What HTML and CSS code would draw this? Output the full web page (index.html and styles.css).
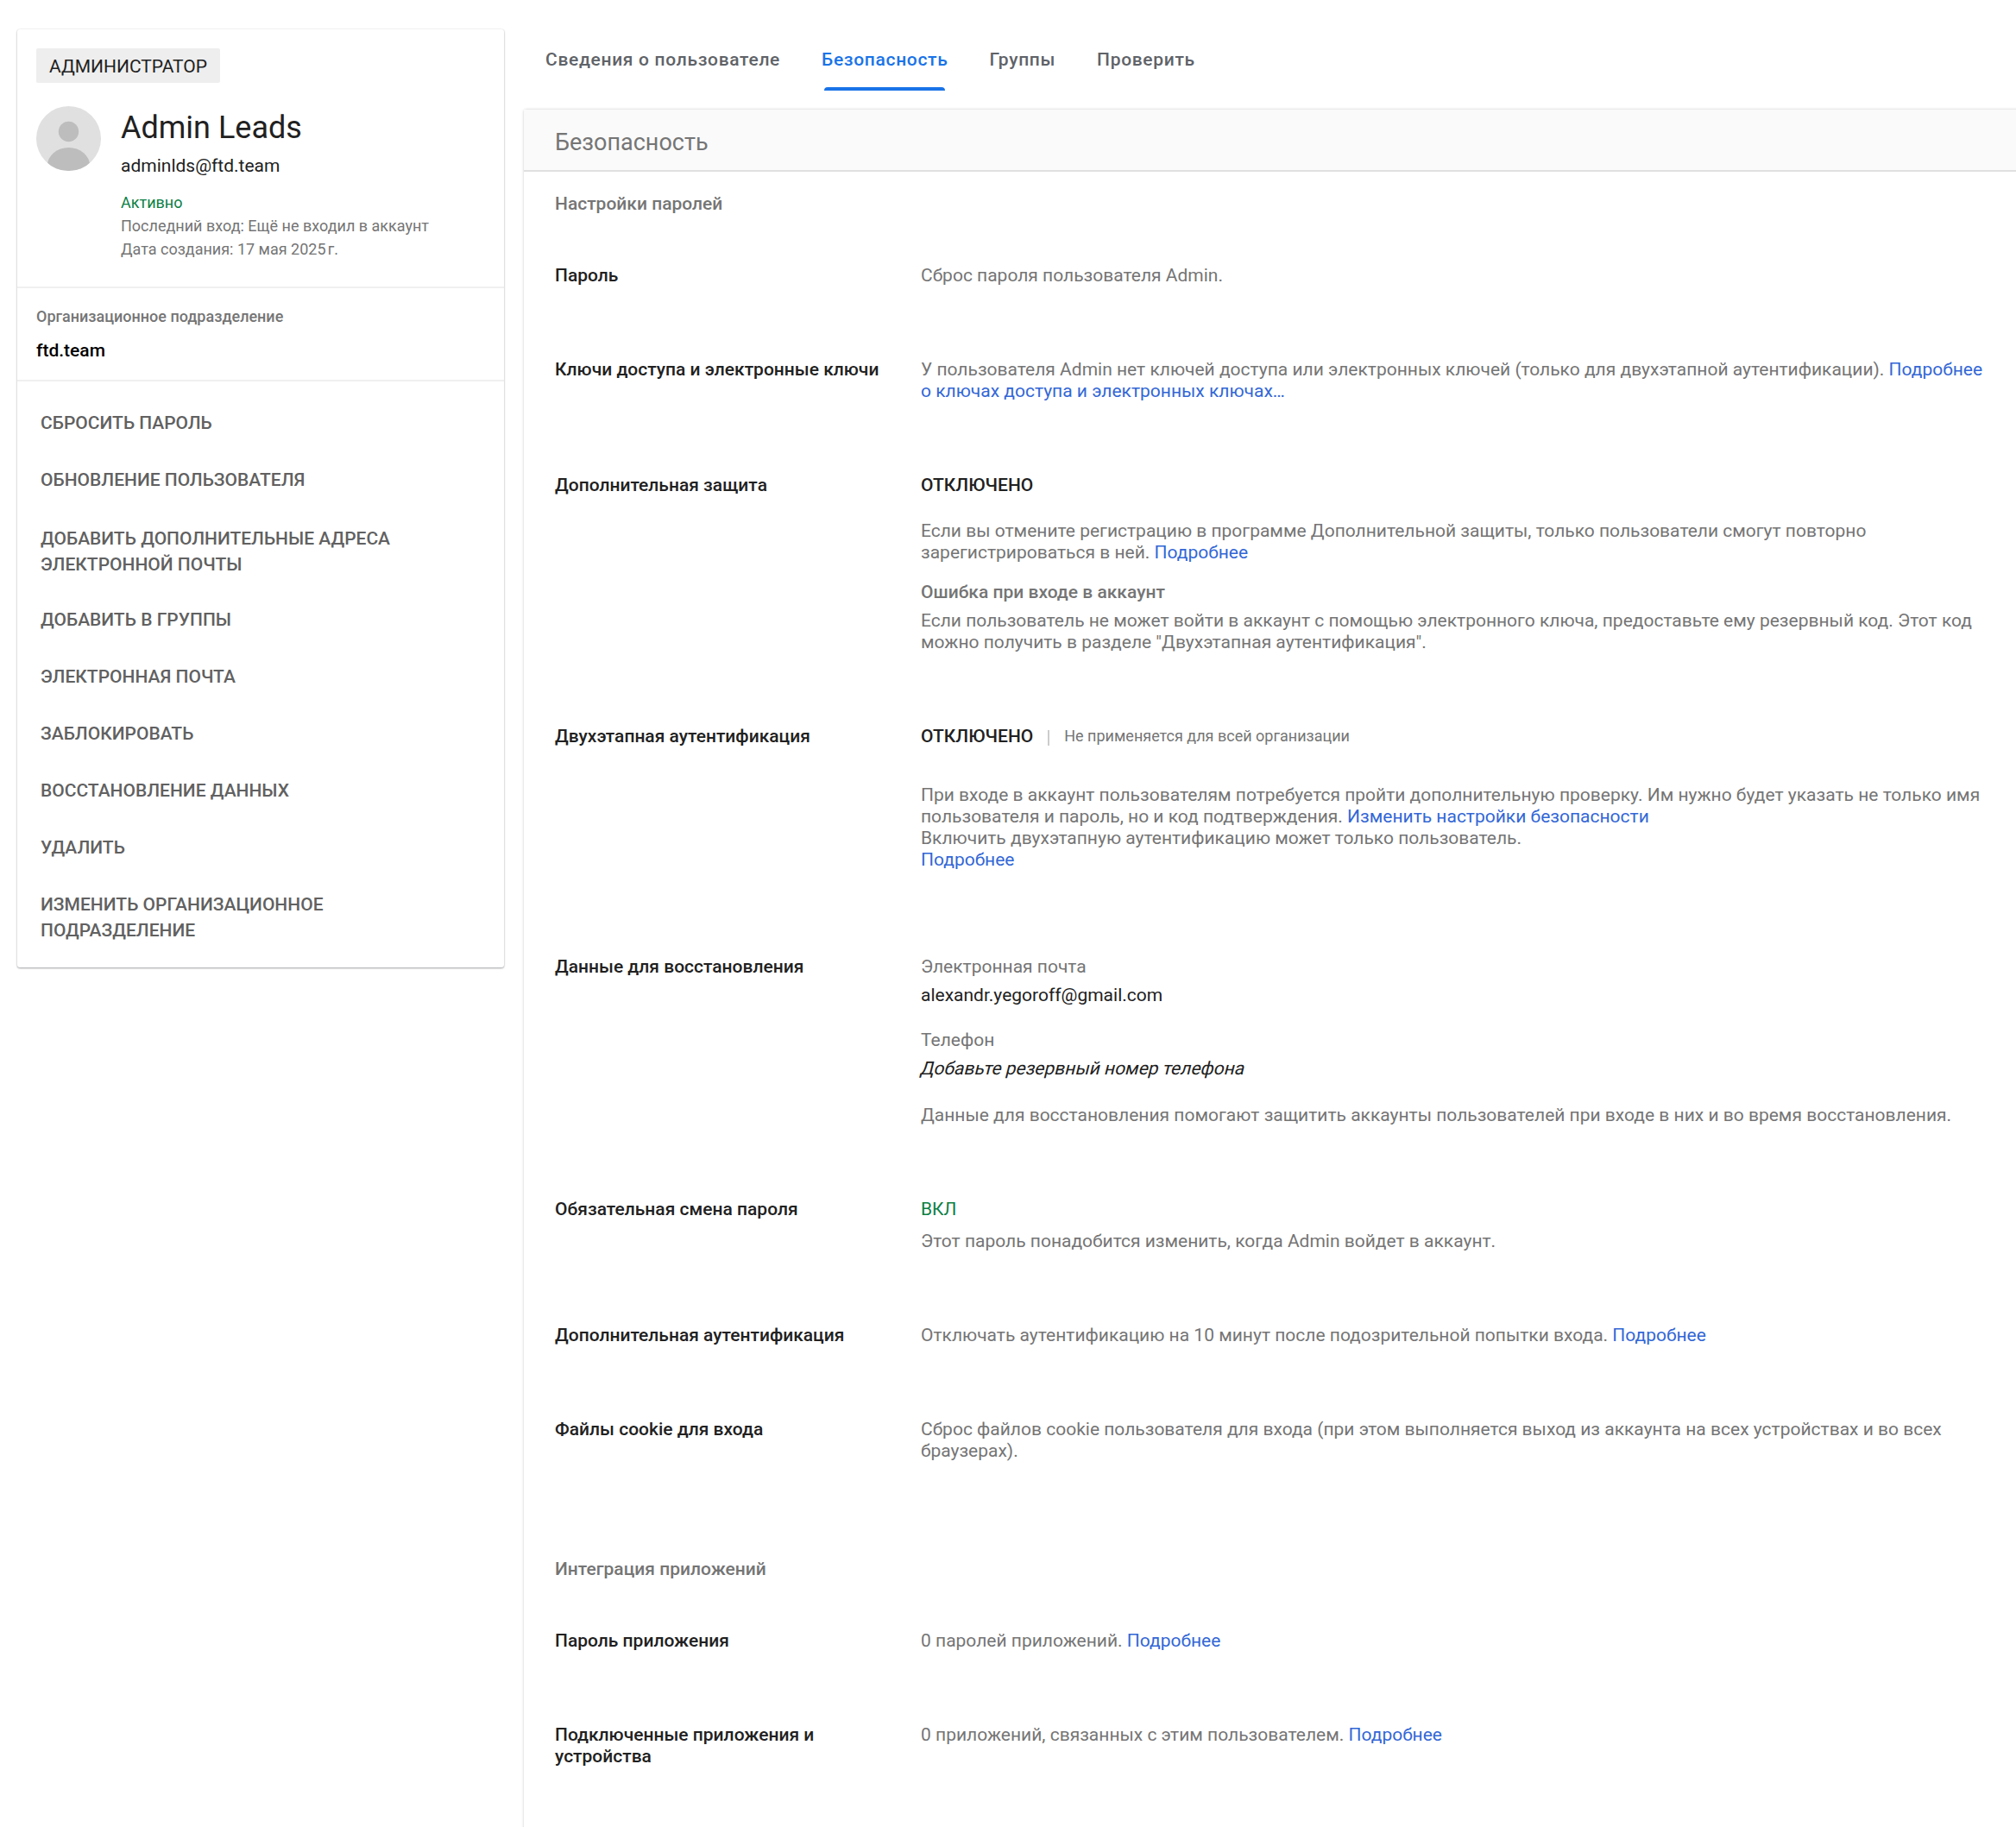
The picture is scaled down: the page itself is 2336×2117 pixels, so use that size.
FILE: index.html
```html
<!DOCTYPE html>
<html lang="ru">
<head>
<meta charset="utf-8">
<title>Admin Leads</title>
<link rel="stylesheet" href="styles.css">
</head>
<body>
<div class="page">
  <aside class="side">
    <section class="card">
      <div class="profile">
        <span class="badge">АДМИНИСТРАТОР</span>
        <div class="who">
          <svg class="avatar" viewBox="0 0 75 75"><defs><clipPath id="c"><circle cx="37.5" cy="37.5" r="37.5"/></clipPath></defs><circle cx="37.5" cy="37.5" r="37.5" fill="#e0e0e0"/><g clip-path="url(#c)" fill="#bdbdbd"><ellipse cx="37.5" cy="29.5" rx="11.7" ry="11.8"/><ellipse cx="37.5" cy="69" rx="24.7" ry="21"/></g></svg>
          <div class="who-text">
            <h1 class="name">Admin Leads</h1>
            <div class="email">adminlds@ftd.team</div>
            <div class="status">Активно</div>
            <div class="meta">Последний вход: Ещё не входил в аккаунт</div>
            <div class="meta">Дата создания: 17 мая 2025&#8239;г.</div>
          </div>
        </div>
      </div>
      <div class="org">
        <div class="org-label">Организационное подразделение</div>
        <div class="org-value">ftd.team</div>
      </div>
      <nav class="menu">
        <a class="menu-item">Сбросить пароль</a>
        <a class="menu-item">Обновление пользователя</a>
        <a class="menu-item menu-item-low">Добавить дополнительные адреса электронной почты</a>
        <a class="menu-item">Добавить в группы</a>
        <a class="menu-item">Электронная почта</a>
        <a class="menu-item">Заблокировать</a>
        <a class="menu-item">Восстановление данных</a>
        <a class="menu-item">Удалить</a>
        <a class="menu-item">Изменить организационное подразделение</a>
      </nav>
    </section>
  </aside>
  <main class="main">
    <div class="tabs">
      <a class="tab">Сведения о пользователе</a>
      <a class="tab active">Безопасность</a>
      <a class="tab">Группы</a>
      <a class="tab">Проверить</a>
    </div>
    <section class="panel">
      <h2 class="panel-head">Безопасность</h2>
      <div class="panel-body">
        <h3 class="group">Настройки паролей</h3>
        <div class="row">
          <div class="label">Пароль</div>
          <div class="value">Сброс пароля пользователя Admin.</div>
        </div>
        <div class="row">
          <div class="label">Ключи доступа и электронные ключи</div>
          <div class="value">У пользователя Admin нет ключей доступа или электронных ключей (только для двухэтапной аутентификации). <a class="link">Подробнее о ключах доступа и электронных ключах…</a></div>
        </div>
        <div class="row">
          <div class="label">Дополнительная защита</div>
          <div class="value">
            <div class="state">ОТКЛЮЧЕНО</div>
            <p class="para p-28">Если вы отмените регистрацию в программе Дополнительной защиты, только пользователи смогут повторно зарегистрироваться в ней. <a class="link">Подробнее</a></p>
            <div class="sub p-21">Ошибка при входе в аккаунт</div>
            <p class="para p-8">Если пользователь не может войти в аккаунт с помощью электронного ключа, предоставьте ему резервный код. Этот код можно получить в разделе "Двухэтапная аутентификация".</p>
          </div>
        </div>
        <div class="row row-tall">
          <div class="label">Двухэтапная аутентификация</div>
          <div class="value">
            <div class="state-line"><span class="state">ОТКЛЮЧЕНО</span><span class="sep"></span><span class="note">Не применяется для всей организации</span></div>
            <p class="para p-43">При входе в аккаунт пользователям потребуется пройти дополнительную проверку. Им нужно будет указать не только имя пользователя и пароль, но и код подтверждения. <a class="link">Изменить настройки безопасности</a><br>Включить двухэтапную аутентификацию может только пользователь.<br><a class="link">Подробнее</a></p>
          </div>
        </div>
        <div class="row">
          <div class="label">Данные для восстановления</div>
          <div class="value">
            <div>Электронная почта</div>
            <div class="dark p-8">alexandr.yegoroff@gmail.com</div>
            <div class="p-27">Телефон</div>
            <div class="dark p-8"><span class="oblique">Добавьте резервный номер телефона</span></div>
            <p class="para p-29">Данные для восстановления помогают защитить аккаунты пользователей при входе в них и во время восстановления.</p>
          </div>
        </div>
        <div class="row">
          <div class="label">Обязательная смена пароля</div>
          <div class="value">
            <div class="on">ВКЛ</div>
            <p class="para p-12">Этот пароль понадобится изменить, когда Admin войдет в аккаунт.</p>
          </div>
        </div>
        <div class="row">
          <div class="label">Дополнительная аутентификация</div>
          <div class="value">Отключать аутентификацию на 10 минут после подозрительной попытки входа. <a class="link">Подробнее</a></div>
        </div>
        <div class="row">
          <div class="label">Файлы cookie для входа</div>
          <div class="value">Сброс файлов cookie пользователя для входа (при этом выполняется выход из аккаунта на всех устройствах и во всех браузерах).</div>
        </div>
        <h3 class="group group-2">Интеграция приложений</h3>
        <div class="row">
          <div class="label">Пароль приложения</div>
          <div class="value">0 паролей приложений. <a class="link">Подробнее</a></div>
        </div>
        <div class="row">
          <div class="label">Подключенные приложения и устройства</div>
          <div class="value">0 приложений, связанных с этим пользователем. <a class="link">Подробнее</a></div>
        </div>
      </div>
    </section>
  </main>
</div>
</body>
</html>
```

FILE: styles.css
```css
* { box-sizing: border-box; }
html, body { margin: 0; padding: 0; height: 100%; background: #fff; overflow: hidden; }
body { font-family: Roboto, "Liberation Sans", sans-serif; font-size: 21px; line-height: 25px; color: #757575; }
h1, h2, h3, p { margin: 0; font-weight: 400; }
.page { display: flex; align-items: flex-start; height: 2117px; overflow: hidden; padding-left: 20px; }
.side { width: 564px; flex: none; padding-top: 34px; }
.card { background: #fff; border-radius: 3px; box-shadow: 0 1px 2px rgba(60,64,67,.45), 0 0 2px rgba(60,64,67,.15); }
.profile { padding: 22px 22px 0; height: 300px; border-bottom: 2px solid #f0f0f0; }
.badge { display: inline-block; height: 40px; padding: 0 15px; line-height: 42px; background: #eee; border-radius: 2px; color: #212121; font-size: 21px; }
.who { display: flex; gap: 23px; margin-top: 27px; }
.avatar { width: 75px; height: 75px; flex: none; }
.who-text { padding-top: 5px; }
.name { font-size: 36px; line-height: 40px; color: #212121; }
.email { margin-top: 9px; font-size: 21px; line-height: 30px; color: #212121; }
.status { margin-top: 14px; font-size: 18px; line-height: 27px; color: #0b8043; }
.meta { font-size: 18px; line-height: 27px; color: #757575; }
.org { height: 108px; padding: 20px 22px 0; border-bottom: 2px solid #f0f0f0; }
.org-label { font-size: 18px; line-height: 25px; font-weight: 500; color: #757575; }
.org-value { margin-top: 13px; font-size: 21px; line-height: 28px; font-weight: 500; color: #000; }
.menu { padding: 15px 27px 10px; }
.menu-item { display: block; padding: 18px 0; font-size: 21px; line-height: 30px; font-weight: 500; text-transform: uppercase; color: #616161; max-width: 470px; }
.menu-item-low { padding: 20px 0 16px; }
.main { flex: 1; min-width: 0; margin-left: 23px; }
.tabs { display: flex; height: 127px; gap: 48px; padding: 53px 0 0 25px; }
.tab { position: relative; font-size: 21px; line-height: 32px; font-weight: 500; letter-spacing: .68px; color: #5f6368; height: 52px; }
.tab.active { color: #1a73e8; }
.tab.active::after { content: ""; position: absolute; left: 3px; right: 3px; bottom: 0; height: 4px; border-radius: 4px 4px 0 0; background: #1a73e8; }
.panel { background: #fff; margin-right: -10px; border-radius: 3px 0 0 0; box-shadow: 0 0 3px rgba(60,64,67,.3); min-height: 2000px; }
.panel-head { height: 72px; padding: 0 36px; background: #fafafa; border-bottom: 2px solid #e0e0e0; font-size: 27px; line-height: 76px; color: #757575; }
.panel-body { padding: 23px 41px 0 36px; }
.group { font-size: 21px; line-height: 28px; font-weight: 500; color: #757575; }
.group-2 { margin-top: 54px; }
.row { display: grid; grid-template-columns: 424px 1fr; padding: 28px 0 56px; }
.row-tall { padding-bottom: 71px; }
.group + .row { padding-top: 57px; }
.label { font-size: 21px; line-height: 25px; font-weight: 500; color: #212121; max-width: 390px; }
.value { font-size: 21px; line-height: 25px; color: #757575; }
.link { color: #3367d6; }
.state { color: #212121; font-weight: 500; }
.state-line { display: flex; align-items: center; height: 25px; }
.sep { width: 2px; height: 18px; margin: 2px 17px 0; background: #ccc; }
.note { font-size: 18px; color: #757575; margin-bottom: 3px; }
.sub { font-weight: 500; color: #757575; }
.dark { color: #212121; }
.oblique { display: inline-block; transform: skewX(-14deg); }
.on { color: #0b8043; }
.p-8 { margin-top: 8px; }
.p-12 { margin-top: 12px; }
.p-21 { margin-top: 21px; }
.p-27 { margin-top: 27px; }
.p-28 { margin-top: 28px; }
.p-29 { margin-top: 29px; }
.p-43 { margin-top: 43px; }
```
